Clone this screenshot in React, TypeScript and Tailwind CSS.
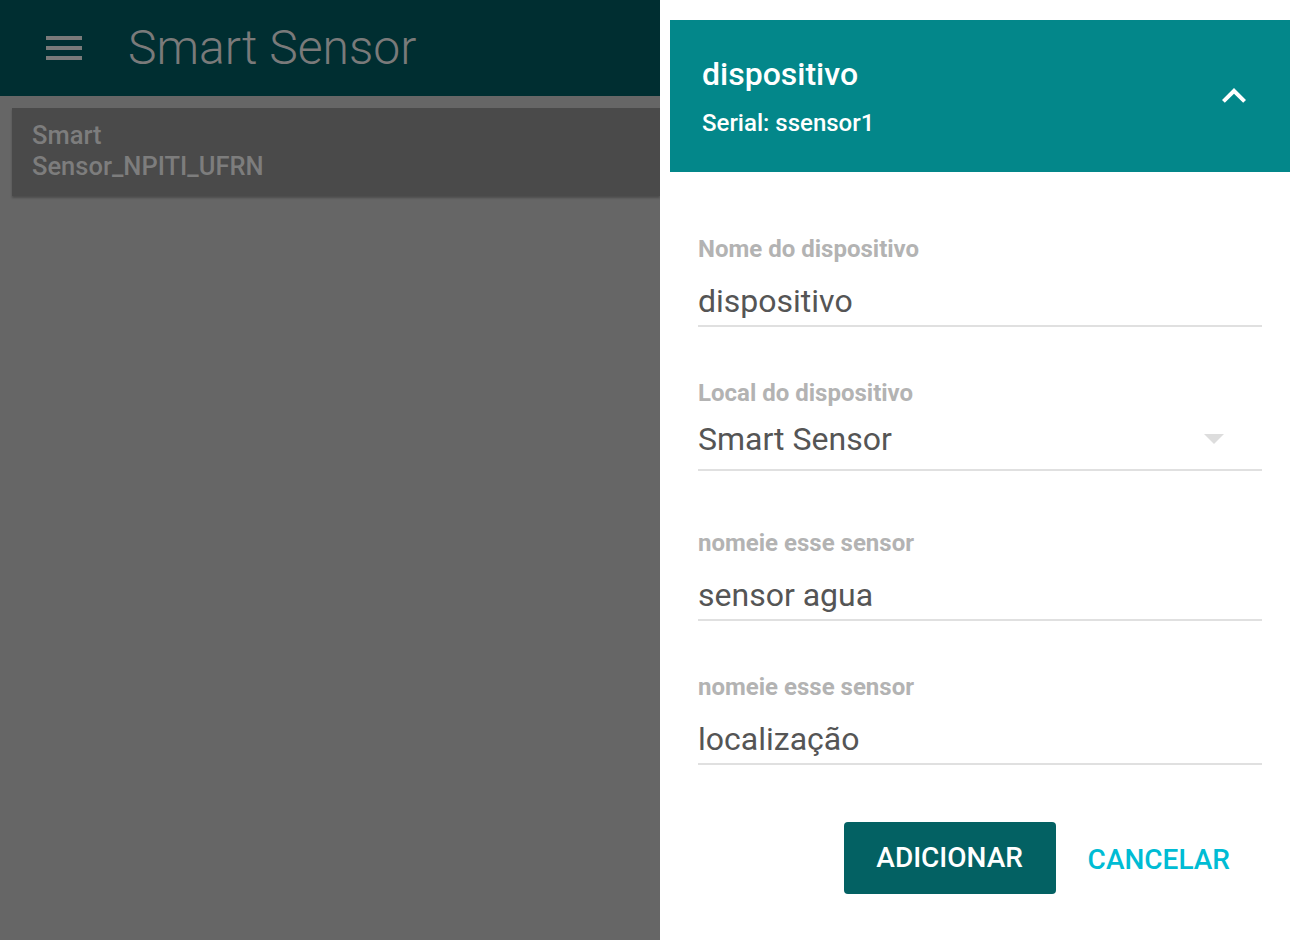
const font = { fontFamily: "Roboto, 'Noto Sans', sans-serif" };

function Field({
  label,
  value,
  select,
  className,
}: {
  label: string;
  value: string;
  select?: boolean;
  className?: string;
}) {
  return (
    <div className={`flex flex-col ${className ?? ""}`}>
      <label className="text-[24px] font-bold leading-[28px] text-[#b3b3b3]">{label}</label>
      <div
        className={`flex items-center justify-between border-b-2 border-[#e0e0e0] ${
          select ? "mt-[10px] pb-[8px]" : "mt-[16px] pb-[2px]"
        }`}
      >
        <span className="text-[32px] leading-[44px] text-[#555555]">{value}</span>
        {select && (
          <svg width="20" height="10" viewBox="0 0 20 10" className="mr-[38px]">
            <path d="M0 0h20L10 10z" fill="#dddddd" />
          </svg>
        )}
      </div>
    </div>
  );
}

export default function App() {
  return (
    <div className="flex h-[940px] w-[1300px] overflow-hidden" style={font}>
      {/* page behind the overlay */}
      <div className="flex w-[660px] flex-col bg-[#666666]">
        <header className="flex h-[96px] items-center bg-[#002e31] pl-[46px]">
          <div className="flex w-[36px] flex-col gap-[6px]">
            <span className="h-[4px] bg-[#7a7a7a]" />
            <span className="h-[4px] bg-[#7a7a7a]" />
            <span className="h-[4px] bg-[#7a7a7a]" />
          </div>
          <h1 className="ml-[46px] text-[48px] font-light leading-none text-[#7a7a7a]">Smart Sensor</h1>
        </header>
        <div className="ml-[12px] mt-[12px] h-[88px] bg-[#4a4a4a] pl-[20px] pt-[12px] shadow-[0_2px_2px_rgba(0,0,0,0.25)]">
          <p className="text-[25.5px] font-medium leading-[31px] text-[#7d7d7d]">
            Smart
            <br />
            Sensor_NPITI_UFRN
          </p>
        </div>
      </div>

      {/* dialog panel */}
      <div className="flex w-[640px] flex-col bg-white px-[10px] pt-[20px]">
        <div className="flex h-[152px] items-center justify-between bg-[#03878a] pl-[32px] pr-[32px]">
          <div className="flex flex-col text-white">
            <span className="text-[32px] font-medium leading-[36px]">dispositivo</span>
            <span className="mt-[17px] text-[24px] font-medium leading-[28px]">Serial: ssensor1</span>
          </div>
          <svg width="48" height="48" viewBox="0 0 24 24">
            <path d="M12 8l-6 6 1.41 1.41L12 10.83l4.59 4.58L18 14z" fill="#ffffff" />
          </svg>
        </div>

        <div className="flex flex-col px-[28px] pt-[63px]">
          <Field label="Nome do dispositivo" value="dispositivo" />
          <Field label="Local do dispositivo" value="Smart Sensor" select className="mt-[52px]" />
          <Field label="nomeie esse sensor" value="sensor agua" className="mt-[58px]" />
          <Field label="nomeie esse sensor" value="localização" className="mt-[52px]" />
        </div>

        <div className="mt-[57px] flex items-center justify-end gap-[32px] pr-[60px]">
          <button className="h-[72px] w-[212px] rounded-[4px] bg-[#036163] text-[28px] font-medium text-white">
            ADICIONAR
          </button>
          <button className="pt-[4px] text-[28px] font-medium text-[#00bcd4]">CANCELAR</button>
        </div>
      </div>
    </div>
  );
}
